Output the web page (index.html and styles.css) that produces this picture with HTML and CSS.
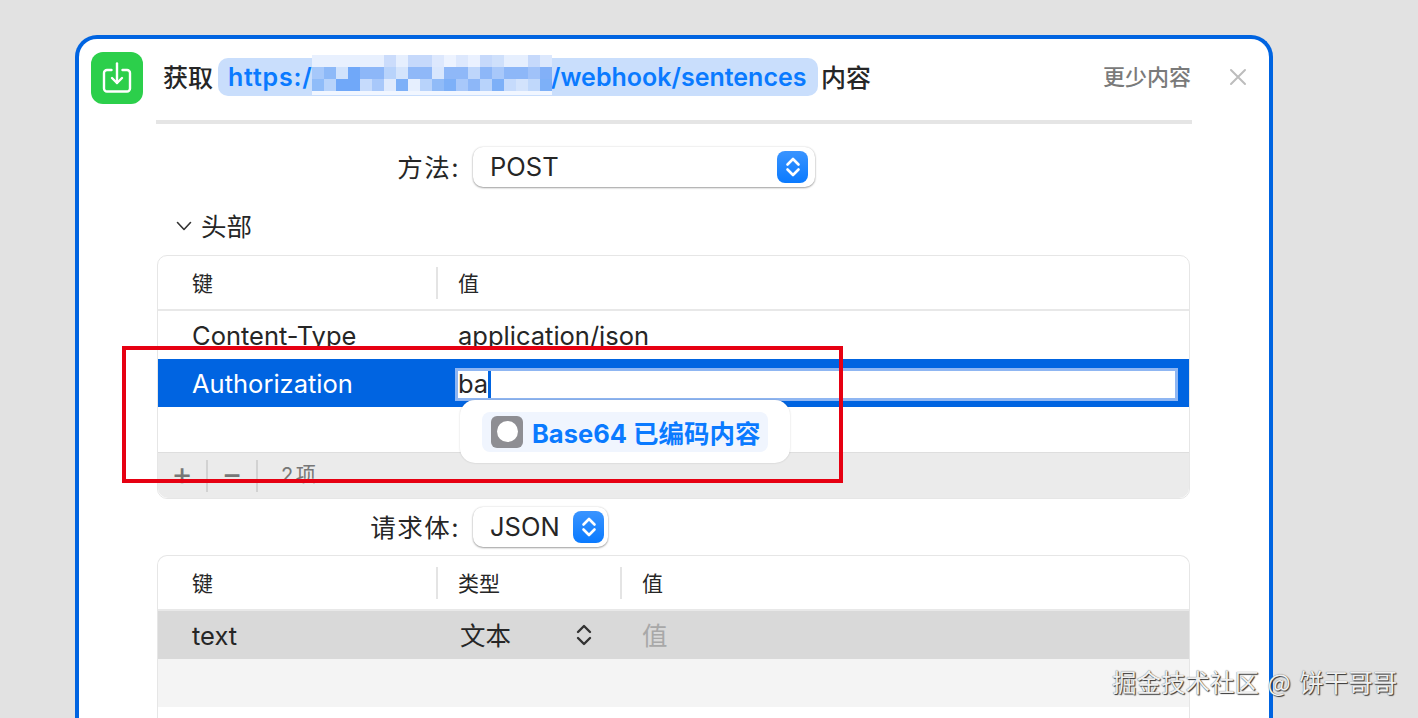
FILE: index.html
```html
<!DOCTYPE html>
<html lang="zh-CN">
<head>
  <meta charset="UTF-8">
  <title>获取内容</title>
  <link rel="stylesheet" href="styles.css">
</head>
<body>
  <div class="card">
    <div class="header">
      <div class="app-icon">
        <svg width="30" height="32" viewBox="0 0 30 32" fill="none" stroke="#fff" stroke-width="2.4" stroke-linecap="round" stroke-linejoin="round">
          <path d="M9.5 8H5a3 3 0 0 0-3 3v15.5a3 3 0 0 0 3 3h20a3 3 0 0 0 3-3V11a3 3 0 0 0-3-3h-4.5"/>
          <path d="M15 1.5V21"/>
          <path d="M10 16l5 5 5-5"/>
        </svg>
      </div>
      <div class="title">
        <span>获取</span>
        <span class="pill">
          <span class="pill-scheme">https:/</span>
          <svg class="mosaic" width="240" height="40" viewBox="0 0 240 40" shape-rendering="crispEdges">
            <g>
              <rect x="0" y="0" width="72" height="12" fill="#e8f0fe"/>
              <rect x="72" y="0" width="12" height="12" fill="#cbdcfb"/>
              <rect x="84" y="0" width="12" height="12" fill="#e6effe"/>
              <rect x="96" y="0" width="24" height="12" fill="#c6d9fb"/>
              <rect x="120" y="0" width="12" height="12" fill="#dde8fd"/>
              <rect x="132" y="0" width="12" height="12" fill="#edf3ff"/>
              <rect x="144" y="0" width="12" height="12" fill="#dde8fd"/>
              <rect x="156" y="0" width="12" height="12" fill="#eaf1ff"/>
              <rect x="168" y="0" width="12" height="12" fill="#c6d9fb"/>
              <rect x="180" y="0" width="12" height="12" fill="#cfe0fb"/>
              <rect x="192" y="0" width="24" height="12" fill="#e6effe"/>
              <rect x="216" y="0" width="12" height="12" fill="#c6d9fb"/>
              <rect x="228" y="0" width="12" height="12" fill="#dce8fd"/>
            </g>
            <g>
              <rect x="0" y="12" width="12" height="12" fill="#a6c8fa"/>
              <rect x="12" y="12" width="12" height="12" fill="#8db9f8"/>
              <rect x="24" y="12" width="12" height="12" fill="#d0e2fc"/>
              <rect x="36" y="12" width="12" height="12" fill="#70a8f9"/>
              <rect x="48" y="12" width="24" height="12" fill="#8db7f8"/>
              <rect x="72" y="12" width="12" height="12" fill="#b8d3fb"/>
              <rect x="84" y="12" width="12" height="12" fill="#d4e4fc"/>
              <rect x="96" y="12" width="24" height="12" fill="#8fb8f8"/>
              <rect x="120" y="12" width="12" height="12" fill="#d8e6fd"/>
              <rect x="132" y="12" width="24" height="12" fill="#8fb8f8"/>
              <rect x="156" y="12" width="12" height="12" fill="#bed6fb"/>
              <rect x="168" y="12" width="12" height="12" fill="#8db7f8"/>
              <rect x="180" y="12" width="12" height="12" fill="#a8c8fa"/>
              <rect x="192" y="12" width="24" height="12" fill="#8db7f8"/>
              <rect x="216" y="12" width="12" height="12" fill="#a0c2f9"/>
              <rect x="228" y="12" width="12" height="12" fill="#82b0f8"/>
            </g>
            <g>
              <rect x="0" y="24" width="12" height="12" fill="#8fbcf9"/>
              <rect x="12" y="24" width="12" height="12" fill="#b7d3fb"/>
              <rect x="24" y="24" width="24" height="12" fill="#70a8f9"/>
              <rect x="48" y="24" width="12" height="12" fill="#c6dbfc"/>
              <rect x="60" y="24" width="12" height="12" fill="#a8c8fa"/>
              <rect x="72" y="24" width="12" height="12" fill="#dfeafd"/>
              <rect x="84" y="24" width="12" height="12" fill="#7db0f8"/>
              <rect x="96" y="24" width="12" height="12" fill="#e6effe"/>
              <rect x="108" y="24" width="12" height="12" fill="#b8d3fb"/>
              <rect x="120" y="24" width="12" height="12" fill="#90bbf8"/>
              <rect x="132" y="24" width="12" height="12" fill="#7db0f8"/>
              <rect x="144" y="24" width="12" height="12" fill="#a8c8fa"/>
              <rect x="156" y="24" width="12" height="12" fill="#8db7f8"/>
              <rect x="168" y="24" width="12" height="12" fill="#b8d3fb"/>
              <rect x="180" y="24" width="12" height="12" fill="#7db0f8"/>
              <rect x="192" y="24" width="12" height="12" fill="#c6dbfc"/>
              <rect x="204" y="24" width="12" height="12" fill="#d3e3fc"/>
              <rect x="216" y="24" width="12" height="12" fill="#c0d8fb"/>
              <rect x="228" y="24" width="12" height="12" fill="#7db0f8"/>
            </g>
            <rect x="0" y="36" width="240" height="4" fill="#f1f6ff"/>
          </svg>
          <span>/webhook/sentences</span>
        </span>
        <span>内容</span>
      </div>
      <span class="less">更少内容</span>
      <svg class="close" width="18" height="18" viewBox="0 0 18 18" fill="none" stroke="#bdbdbd" stroke-width="2" stroke-linecap="round">
        <path d="M2 2l14 14M16 2L2 16"/>
      </svg>
    </div>
    <div class="content">
      <div class="divider"></div>

      <div class="form-row form-row-first">
        <span class="form-label">方法:</span>
        <div class="select select-wide">
          <span class="select-text">POST</span>
          <span class="stepper">
            <svg width="18" height="24" viewBox="0 0 18 24" fill="none" stroke="#fff" stroke-width="2.6" stroke-linecap="round" stroke-linejoin="round"><path d="M3.5 9.5L9 4l5.5 5.5M3.5 14.5L9 20l5.5-5.5"/></svg>
          </span>
        </div>
      </div>

      <div class="section-head">
        <svg width="16" height="10" viewBox="0 0 16 10" fill="none" stroke="#333" stroke-width="1.6" stroke-linecap="round" stroke-linejoin="round"><path d="M1.5 1.5L8 8.5l6.5-7"/></svg>
        <span class="section-name">头部</span>
      </div>

      <div class="table">
        <div class="thead">
          <span class="th th-key">键</span>
          <span class="th th-last">值</span>
        </div>
        <div class="tr">
          <span class="td-key">Content-Type</span>
          <span>application/json</span>
        </div>
        <div class="tr tr-selected">
          <span class="td-key td-key-edit">Authorization</span>
          <div class="edit">
            <span class="edit-text">ba</span>
          </div>
          <div class="popup">
            <div class="token">
              <span class="token-icon"><span class="token-dot"></span></span>
              <span>Base64 已编码内容</span>
            </div>
          </div>
        </div>
        <div class="tr tr-empty"></div>
        <div class="tfoot">
          <span class="tool">+</span>
          <span class="tool">−</span>
          <span class="count">2 项</span>
        </div>
      </div>

      <div class="form-row form-row-body">
        <span class="form-label">请求体:</span>
        <div class="select select-small">
          <span class="select-text">JSON</span>
          <span class="stepper">
            <svg width="18" height="24" viewBox="0 0 18 24" fill="none" stroke="#fff" stroke-width="2.6" stroke-linecap="round" stroke-linejoin="round"><path d="M3.5 9.5L9 4l5.5 5.5M3.5 14.5L9 20l5.5-5.5"/></svg>
          </span>
        </div>
      </div>

      <div class="table table-open">
        <div class="thead">
          <span class="th th-key">键</span>
          <span class="th th-type">类型</span>
          <span class="th th-last">值</span>
        </div>
        <div class="tr tr-grey">
          <span class="td-key">text</span>
          <span class="td-type">
            <span class="cjk-cell">文本</span>
            <svg width="16" height="24" viewBox="0 0 16 24" fill="none" stroke="#333" stroke-width="2.4" stroke-linecap="round" stroke-linejoin="round"><path d="M2 9l6-6 6 6M2 15l6 6 6-6"/></svg>
          </span>
          <span class="placeholder cjk-cell">值</span>
        </div>
        <div class="tr tr-stripe"></div>
        <div class="tr"></div>
      </div>
    </div>
  </div>

  <div class="red-box"></div>
  <div class="watermark">掘金技术社区 @ 饼干哥哥</div>
</body>
</html>
```

FILE: styles.css
```css
* {
  box-sizing: border-box;
}
html, body {
  height: 718px;
  margin: 0;
  overflow: hidden;
}
body {
  position: relative;
  padding: 35px 0 0 75px;
  background: #e2e2e2;
  color: #262626;
  font-family: Inter, "Noto Sans CJK SC", sans-serif;
  font-size: 25.5px;
}

/* the window carries on below the frame, so it has no bottom edge here */
.card {
  width: 1198px;
  height: 683px;
  overflow: hidden;
  background: #fff;
  border: 4px solid #0064e1;
  border-bottom: 0;
  border-radius: 22px 22px 0 0;
}

/* header */
.header {
  display: flex;
  align-items: flex-start;
  padding: 13px 0 0 12px;
  height: 81px;
}
.app-icon {
  display: flex;
  align-items: center;
  justify-content: center;
  width: 52px;
  height: 52px;
  background: #2ccf4b;
  border-radius: 12px;
  flex-shrink: 0;
}
.title {
  display: flex;
  align-items: center;
  height: 38px;
  margin: 5px 0 0 20px;
  font-weight: 500;
  font-size: 25px;
  white-space: nowrap;
}
.pill {
  display: flex;
  align-items: center;
  align-self: flex-start;
  width: 600px;
  height: 38px;
  margin: 1px 3px 0 5px;
  padding-left: 10px;
  background: #c9defc;
  border-radius: 10px;
  color: #0a7aff;
  font-weight: 600;
}
.pill-scheme {
  width: 84px;
  letter-spacing: .8px;
  flex-shrink: 0;
}
.mosaic {
  flex-shrink: 0;
  margin: -4px -1px 0 0;
  filter: blur(.6px);
}
.less {
  margin: 7px 0 0 232px;
  color: #7a7a7a;
  font-size: 22px;
  font-weight: 500;
  white-space: nowrap;
}
.close {
  margin: 16px 0 0 38px;
}

.content {
  padding-left: 78px;
}
.divider {
  width: 1036px;
  height: 4px;
  margin-left: -1px;
  background: #e5e5e5;
}

/* label + popup button rows */
.form-row {
  display: flex;
  align-items: center;
  height: 40px;
}
.form-row-first {
  margin-top: 23px;
}
.form-row-body {
  margin: 8px 0;
}
.form-label {
  width: 303px;
  margin: -3px 13px 0 0;
  letter-spacing: 1.5px;
  text-align: right;
  white-space: nowrap;
}
.select {
  display: flex;
  align-items: center;
  justify-content: space-between;
  height: 40px;
  padding: 0 4px 0 17px;
  background: #fff;
  border-radius: 10px;
  box-shadow: 0 1px 2px rgba(0, 0, 0, .35), 0 0 2px rgba(0, 0, 0, .15);
}
.select-text {
  margin-top: -2px;
}
.select-wide {
  width: 342px;
  padding-right: 7px;
}
.select-small {
  width: 135px;
}
.stepper {
  display: flex;
  align-items: center;
  justify-content: center;
  width: 31px;
  height: 32px;
  background: linear-gradient(#3a94ff, #0a7aff);
  border-radius: 8px;
}

.section-head {
  display: flex;
  align-items: center;
  gap: 9px;
  height: 30px;
  margin: 24px 0 14px 19px;
}
.section-name {
  margin-top: -4px;
}

/* tables */
.table {
  width: 1033px;
  background: #fff;
  border: 1px solid #e6e6e6;
  border-radius: 10px;
}
.table-open {
  border-bottom: 0;
  border-radius: 10px 10px 0 0;
}
.thead {
  display: flex;
  align-items: center;
  height: 55px;
  border-bottom: 2px solid #e8e8e8;
  font-size: 21px;
}
.th {
  height: 32px;
  line-height: 33px;
  padding-left: 34px;
}
.th-key {
  width: 280px;
  border-right: 2px solid #e4e4e4;
}
.th-type {
  width: 184px;
  padding-left: 20px;
  border-right: 2px solid #e4e4e4;
}
.th-last {
  padding-left: 20px;
}
.tr {
  position: relative;
  display: flex;
  align-items: center;
  height: 48px;
}
.td-key {
  width: 300px;
  padding-left: 34px;
  flex-shrink: 0;
}
.td-key-edit {
  width: 297px;
}
.tr-selected {
  background: #0064e1;
  color: #fff;
}
.tr-empty {
  height: 45px;
}
.tr-grey {
  background: #d9d9d9;
}
.tr-stripe {
  background: #f4f4f4;
}
.cjk-cell {
  margin-top: -3px;
}

.edit {
  display: flex;
  align-items: center;
  width: 723px;
  height: 33px;
  margin-top: 2px;
  background: #fff;
  border: 3px solid #8fb6f2;
  color: #262626;
}
.edit-text {
  height: 27px;
  line-height: 26px;
  border-right: 3px solid #0064e1;
}

.popup {
  position: absolute;
  top: 41px;
  left: 302px;
  display: flex;
  align-items: center;
  justify-content: center;
  width: 330px;
  height: 63px;
  background: #fff;
  border-radius: 15px;
  box-shadow: 0 0 2px rgba(0, 0, 0, .18);
}
.token {
  display: flex;
  align-items: center;
  gap: 9px;
  width: 286px;
  height: 40px;
  padding-left: 9px;
  background: #f0f5fe;
  border-radius: 8px;
  color: #0a7aff;
  font-size: 25.5px;
  font-weight: 700;
  white-space: nowrap;
}
.token-icon {
  display: flex;
  align-items: center;
  justify-content: center;
  width: 32px;
  height: 32px;
  background: #8e8e93;
  border-radius: 6px;
  flex-shrink: 0;
}
.token-dot {
  width: 21px;
  height: 21px;
  background: #fff;
  border-radius: 50%;
}

.tfoot {
  display: flex;
  align-items: center;
  height: 46px;
  background: #ebebeb;
  border-top: 1px solid #dedede;
  border-radius: 0 0 10px 10px;
  color: #777;
}
.tool {
  width: 50px;
  height: 32px;
  line-height: 28px;
  text-align: center;
  border-right: 2px solid #d2d2d2;
  font-size: 32px;
}
.count {
  margin: -5px 0 0 23px;
  font-size: 20px;
  word-spacing: -3px;
}

.td-type {
  display: flex;
  align-items: center;
  justify-content: space-between;
  width: 132px;
  margin-left: 2px;
  flex-shrink: 0;
}
.placeholder {
  margin-left: 50px;
  color: #a8a8a8;
}

/* overlays drawn on top of the screenshot */
.red-box {
  position: absolute;
  top: 346px;
  left: 122px;
  width: 721px;
  height: 137px;
  border: 4px solid #e60012;
  pointer-events: none;
}
.watermark {
  position: absolute;
  top: 667px;
  left: 1112px;
  color: #f0f0f0;
  font-family: "Noto Sans CJK SC", sans-serif;
  font-size: 24.5px;
  line-height: 30px;
  word-spacing: 3px;
  white-space: nowrap;
  text-shadow: 1px 1px 1px #333, 0 0 1px #555;
}
```
